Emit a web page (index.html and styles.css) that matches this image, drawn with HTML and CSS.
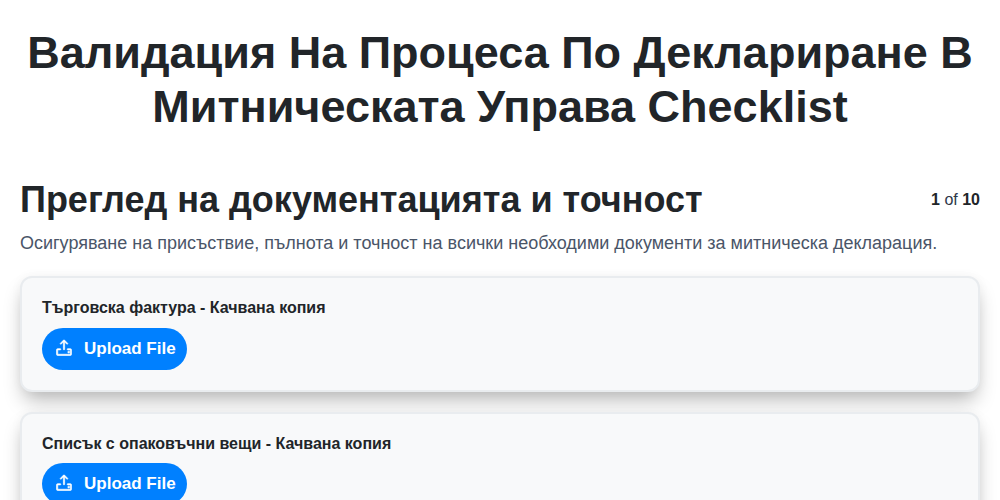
FILE: index.html
```html
<!DOCTYPE html>
<html lang="bg">
<head>
<meta charset="utf-8">
<title>Checklist</title>
<link rel="stylesheet" href="styles.css">
</head>
<body>
<div class="page">
  <h1 class="title">Валидация На Процеса По Деклариране В Митническата Управа Checklist</h1>
  <div class="section-head">
    <h2 class="section-title">Преглед на документацията и точност</h2>
    <div class="progress"><b>1</b> of <b>10</b></div>
  </div>
  <p class="section-desc">Осигуряване на присъствие, пълнота и точност на всички необходими документи за митническа декларация.</p>
  <div class="card">
    <div class="card-label">Търговска фактура - Качвана копия</div>
    <button class="upload">
      <svg class="upload-icon" viewBox="0 0 256 256" fill="currentColor" stroke="currentColor" stroke-width="8"><path d="M224,152v56a16,16,0,0,1-16,16H48a16,16,0,0,1-16-16V152a16,16,0,0,1,16-16H80a8,8,0,0,1,0,16H48v56H208V152H176a8,8,0,0,1,0-16h32A16,16,0,0,1,224,152ZM93.660,77.660,120,51.310V144a8,8,0,0,0,16,0V51.310l26.340,26.350a8,8,0,0,0,11.320-11.320l-40-40a8,8,0,0,0-11.320,0l-40,40A8,8,0,0,0,93.660,77.660ZM200,180a12,12,0,1,0-12,12A12,12,0,0,0,200,180Z"/></svg>
      Upload File
    </button>
  </div>
  <div class="card">
    <div class="card-label">Списък с опаковъчни вещи - Качвана копия</div>
    <button class="upload">
      <svg class="upload-icon" viewBox="0 0 256 256" fill="currentColor" stroke="currentColor" stroke-width="8"><path d="M224,152v56a16,16,0,0,1-16,16H48a16,16,0,0,1-16-16V152a16,16,0,0,1,16-16H80a8,8,0,0,1,0,16H48v56H208V152H176a8,8,0,0,1,0-16h32A16,16,0,0,1,224,152ZM93.660,77.660,120,51.310V144a8,8,0,0,0,16,0V51.310l26.340,26.350a8,8,0,0,0,11.320-11.320l-40-40a8,8,0,0,0-11.320,0l-40,40A8,8,0,0,0,93.660,77.660ZM200,180a12,12,0,1,0-12,12A12,12,0,0,0,200,180Z"/></svg>
      Upload File
    </button>
  </div>
</div>
</body>
</html>
```
FILE: styles.css
```css
* { box-sizing: border-box; }
html, body { margin: 0; height: 100%; overflow: hidden; background: #fff; }
body { font-family: "Liberation Sans", Arial, sans-serif; color: #212529; }
.page { padding: 26px 20px 0; }
.title { margin: 0 0 43px; font-size: 45px; line-height: 54px; font-weight: 700; text-align: center; }
.section-head { display: flex; justify-content: space-between; align-items: flex-start; }
.section-title { margin: 0; font-size: 36px; line-height: 46px; font-weight: 700; }
.progress { font-size: 16px; line-height: 46px; color: #2d3748; }
.progress b { color: #212529; }
.section-desc { margin: 8px 0 21.2px; font-size: 18px; line-height: 24px; color: #4a5568; }
.card { background: #f8f9fa; border: 2px solid #e9ecef; border-radius: 12px; padding: 20px; margin-bottom: 20px; box-shadow: 0 12px 20px -4px rgba(0,0,0,.28), 0 0 12px rgba(0,0,0,.04); }
.card-label { font-size: 16px; line-height: 20.8px; font-weight: 700; margin-bottom: 8.8px; }
.upload { display: flex; align-items: center; gap: 10px; height: 42px; padding: 0 11px 0 12px; border: 0; border-radius: 21px; background: #0080ff; color: #fff; font: 700 17px "Liberation Sans", Arial, sans-serif; }
.upload-icon { width: 20px; height: 20px; margin-bottom: 2px; }
```
